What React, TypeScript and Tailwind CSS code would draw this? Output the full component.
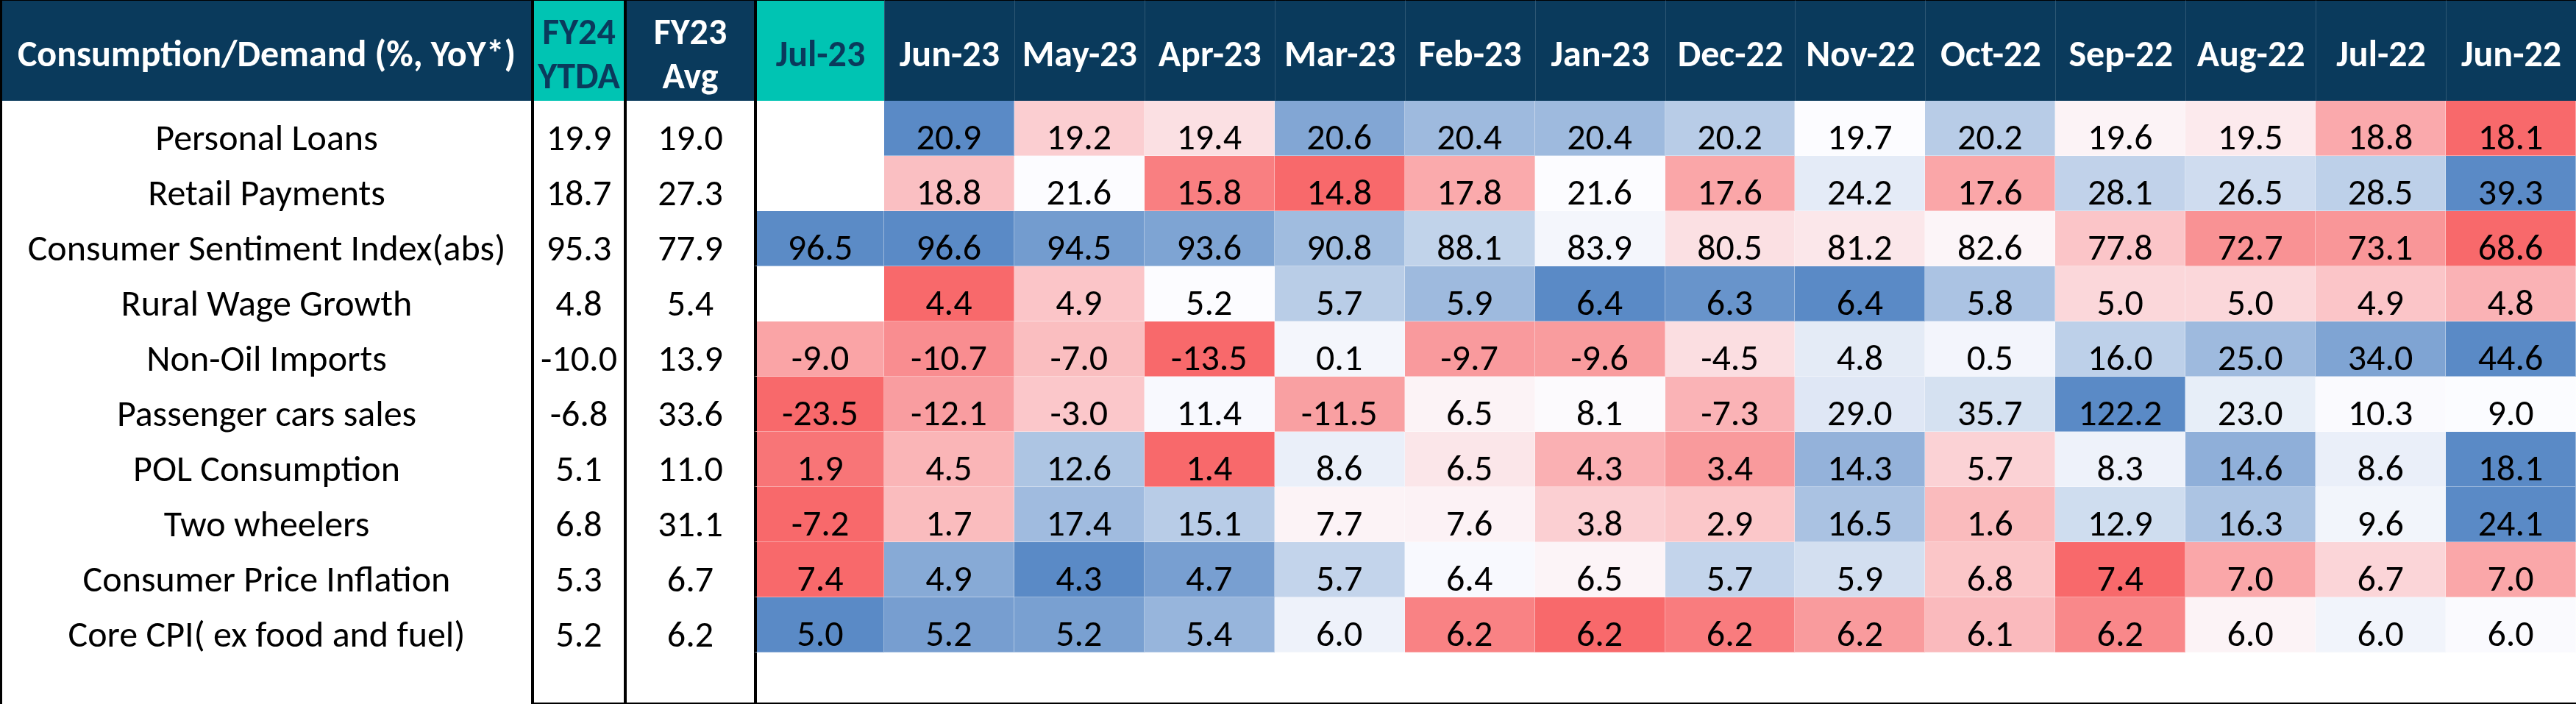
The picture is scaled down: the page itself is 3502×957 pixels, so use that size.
/**
 * Consumption / Demand heatmap table
 */

type Row = {
  label: string;
  ytd: string;
  avg: string;
  vals: (number | null)[];
  raw?: (number | null)[];
  invert?: boolean;
};

const months = [
  'Jul-23', 'Jun-23', 'May-23', 'Apr-23', 'Mar-23', 'Feb-23', 'Jan-23',
  'Dec-22', 'Nov-22', 'Oct-22', 'Sep-22', 'Aug-22', 'Jul-22', 'Jun-22',
];

const rows: Row[] = [
  { label: 'Personal Loans', ytd: '19.9', avg: '19.0', vals: [null, 20.9, 19.2, 19.4, 20.6, 20.4, 20.4, 20.2, 19.7, 20.2, 19.6, 19.5, 18.8, 18.1] },
  { label: 'Retail Payments', ytd: '18.7', avg: '27.3', vals: [null, 18.8, 21.6, 15.8, 14.8, 17.8, 21.6, 17.6, 24.2, 17.6, 28.1, 26.5, 28.5, 39.3] },
  { label: 'Consumer Sentiment Index(abs)', ytd: '95.3', avg: '77.9', vals: [96.5, 96.6, 94.5, 93.6, 90.8, 88.1, 83.9, 80.5, 81.2, 82.6, 77.8, 72.7, 73.1, 68.6] },
  { label: 'Rural Wage Growth', ytd: '4.8', avg: '5.4', vals: [null, 4.4, 4.9, 5.2, 5.7, 5.9, 6.4, 6.3, 6.4, 5.8, 5.0, 5.0, 4.9, 4.8] },
  { label: 'Non-Oil Imports', ytd: '-10.0', avg: '13.9', vals: [-9.0, -10.7, -7.0, -13.5, 0.1, -9.7, -9.6, -4.5, 4.8, 0.5, 16.0, 25.0, 34.0, 44.6] },
  { label: 'Passenger cars sales', ytd: '-6.8', avg: '33.6', vals: [-23.5, -12.1, -3.0, 11.4, -11.5, 6.5, 8.1, -7.3, 29.0, 35.7, 122.2, 23.0, 10.3, 9.0] },
  { label: 'POL Consumption', ytd: '5.1', avg: '11.0', vals: [1.9, 4.5, 12.6, 1.4, 8.6, 6.5, 4.3, 3.4, 14.3, 5.7, 8.3, 14.6, 8.6, 18.1] },
  { label: 'Two wheelers', ytd: '6.8', avg: '31.1', vals: [-7.2, 1.7, 17.4, 15.1, 7.7, 7.6, 3.8, 2.9, 16.5, 1.6, 12.9, 16.3, 9.6, 24.1] },
  { label: 'Consumer Price Inflation', ytd: '5.3', avg: '6.7', invert: true, vals: [7.4, 4.9, 4.3, 4.7, 5.7, 6.4, 6.5, 5.7, 5.9, 6.8, 7.4, 7.0, 6.7, 7.0] },
  {
    label: 'Core CPI( ex food and fuel)', ytd: '5.2', avg: '6.2', invert: true,
    vals: [5.0, 5.2, 5.2, 5.4, 6.0, 6.2, 6.2, 6.2, 6.2, 6.1, 6.2, 6.0, 6.0, 6.0],
    raw: [5.0, 5.18, 5.19, 5.38, 5.92, 6.2, 6.24, 6.21, 6.16, 6.11, 6.19, 6.02, 5.935, 5.99],
  },
];

// Excel's blue - white - red colour scale
const RED = [248, 105, 107];
const WHITE = [252, 252, 255];
const BLUE = [90, 138, 198];

function median(nums: number[]) {
  const s = [...nums].sort((a, b) => a - b);
  const n = s.length;
  return n % 2 ? s[(n - 1) / 2] : (s[n / 2 - 1] + s[n / 2]) / 2;
}

function mix(a: number[], b: number[], t: number) {
  const c = a.map((x, i) => Math.round(x + (b[i] - x) * t));
  return `rgb(${c[0]}, ${c[1]}, ${c[2]})`;
}

function heat(v: number, nums: number[], invert?: boolean) {
  const min = Math.min(...nums);
  const max = Math.max(...nums);
  const mid = median(nums);
  const low = invert ? BLUE : RED;
  const high = invert ? RED : BLUE;
  if (v <= mid) {
    const t = mid === min ? 0 : (mid - v) / (mid - min);
    return mix(WHITE, low, t);
  }
  const t = max === mid ? 0 : (v - mid) / (max - mid);
  return mix(WHITE, high, t);
}

const font = "font-['Carlito','Liberation_Sans_Narrow','Liberation_Sans',sans-serif]";

export default function App() {
  return (
    <div className={`w-full h-[957px] bg-white ${font}`}>
      <div className="grid grid-cols-[722px_126px_177px_repeat(14,minmax(0,1fr))] grid-rows-[137px_repeat(10,75px)_70px]">
        {/* Header row */}
        <div className="flex items-center justify-center pt-2 bg-[#0A3A5C] border-t border-l-[3px] border-black text-white font-bold text-[50px] leading-none whitespace-nowrap">
          Consumption/Demand (%, YoY*)
        </div>
        <div className="flex flex-col items-center justify-center pt-2 bg-[#00C4B3] border-t border-l-4 border-black text-[#0A3A5C] font-bold text-[50px] leading-[60px]">
          <span>FY24</span>
          <span>YTDA</span>
        </div>
        <div className="flex flex-col items-center justify-center pt-2 bg-[#0A3A5C] border-t border-l-4 border-black text-white font-bold text-[50px] leading-[60px]">
          <span>FY23</span>
          <span>Avg</span>
        </div>
        {months.map((m, i) =>
          i === 0 ? (
            <div key={m} className="flex items-center justify-center pt-2 bg-[#00C4B3] border-t border-l-4 border-black text-[#0A3A5C] font-bold text-[50px] leading-none whitespace-nowrap">
              {m}
            </div>
          ) : (
            <div key={m} className="flex items-center justify-center pt-2 bg-[#0A3A5C] border-t border-t-black border-l border-l-white/15 text-white font-bold text-[50px] leading-none whitespace-nowrap">
              {m}
            </div>
          )
        )}

        {/* Data rows */}
        {rows.map((r) => {
          const scale = (r.raw ?? r.vals).filter((v): v is number => v !== null);
          return (
            <div key={r.label} className="contents">
              <div className="flex items-end justify-center border-l-[3px] border-black text-black text-[50px] leading-none whitespace-nowrap">
                {r.label}
              </div>
              <div className="flex items-end justify-center border-l-4 border-black text-black text-[50px] leading-none">
                {r.ytd}
              </div>
              <div className="flex items-end justify-center border-l-4 border-black text-black text-[50px] leading-none">
                {r.avg}
              </div>
              {r.vals.map((v, i) => {
                const edge = i === 0 ? 'border-l-4 border-l-black' : '';
                if (v === null) {
                  return <div key={i} className={`bg-white ${edge}`} />;
                }
                const rv = (r.raw ?? r.vals)[i] as number;
                return (
                  <div
                    key={i}
                    className={`flex items-end justify-center border-r border-b border-r-white/40 border-b-white/40 text-black text-[50px] leading-none ${edge}`}
                    style={{ backgroundColor: heat(rv, scale, r.invert) }}
                  >
                    {v.toFixed(1)}
                  </div>
                );
              })}
            </div>
          );
        })}

        {/* Blank strip under the table */}
        <div className="border-l-[3px] border-black" />
        <div className="border-l-4 border-b-2 border-black" />
        <div className="border-l-4 border-b-2 border-black" />
        <div className="col-span-14 border-l-4 border-b-2 border-black" />
      </div>
    </div>
  );
}
